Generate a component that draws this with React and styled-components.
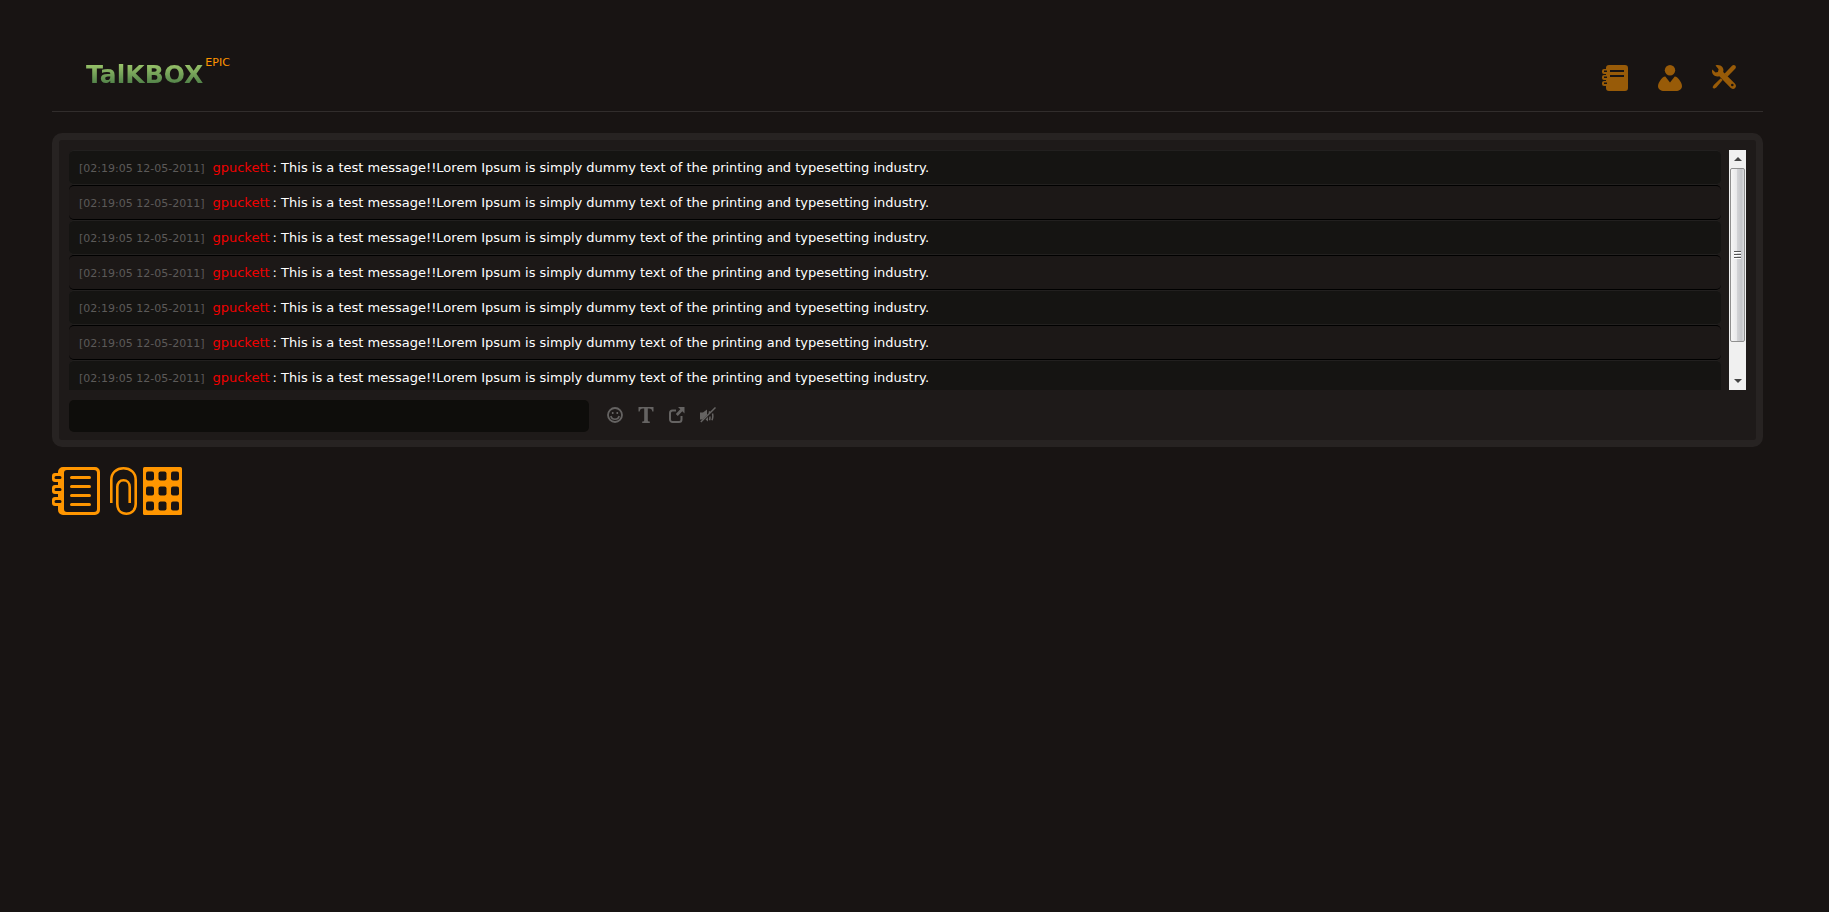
import React, { useRef, useState } from "react";
import styled, { createGlobalStyle } from "styled-components";

const GlobalStyle = createGlobalStyle`
  * {
    box-sizing: border-box;
  }
  body {
    margin: 0;
    background: #181413;
    color: #fff;
    font-family: Verdana, "DejaVu Sans", sans-serif;
    font-size: 13px;
  }
`;

const messages = Array.from({ length: 7 }, (_, id) => ({
  id,
  time: "02:19:05 12-05-2011",
  user: "gpuckett",
  text: "This is a test message!!Lorem Ipsum is simply dummy text of the printing and typesetting industry.",
}));

const NotebookIcon = () => (
  <svg width="26" height="26" viewBox="0 0 26 26" fill="currentColor" fillRule="evenodd">
    <path d="M7 0h16a3 3 0 0 1 3 3v20a3 3 0 0 1-3 3H7a3 3 0 0 1-3-3v-2H2a2 2 0 0 1-2-2v-1a2 2 0 0 1 2-2h2v-1H2a2 2 0 0 1-2-2v-1a2 2 0 0 1 2-2h2V9H2a2 2 0 0 1-2-2V6a2 2 0 0 1 2-2h2V3a3 3 0 0 1 3-3zM8 5v2h14V5zM8 10v2h14v-2zM2 5.500v1.500h3V5.500zM2 11.500v1.500h3v-1.500zM2 17.500V19h3v-1.500z" />
  </svg>
);

const UserIcon = () => (
  <svg width="24" height="26" viewBox="0 0 24 26" fill="currentColor">
    <circle cx="12" cy="5.200" r="5.200" />
    <path d="M7.300 11.500 12 17.500l4.700-6c2 .3 3.300 1.400 4.400 3 1.600 2.300 2.900 4.500 2.900 6.500 0 3.500-3 5-6 5H6c-3 0-6-1.500-6-5 0-2 1.300-4.200 2.900-6.500 1.100-1.600 2.400-2.700 4.400-3z" />
  </svg>
);

const ToolsIcon = () => (
  <svg width="24" height="24" viewBox="0 0 24 24" fill="currentColor" fillRule="evenodd">
    <path d="M3.500.4C6 -.3 9 .2 10.500 2.200c1.200 1.600 1 3.300.7 4.900l11.600 11.300c1.500 1.500 1.500 3.300.3 4.600-1.300 1.300-3.200 1.300-4.600-.2L7.300 11.200C5 11.800 2.800 11.400 1.400 9.800 0 8.300-.3 6.100.3 4.600l3.200 2.800 2.400-.5.7-2.600zM20.300 18.700a1.300 1.300 0 1 0 0 2.600 1.300 1.300 0 0 0 0-2.600z" />
    <path d="M20 .8c1-1 2.300-1 3.200-.2.900.9.900 2.300 0 3.200l-7.800 8-3-3zM8.800 13.200l1.900 1.900-6.400 7.300-2.300 1.300-1.500-1.400 1.300-2.300z" />
  </svg>
);

const SmileIcon = () => (
  <svg width="16" height="16" viewBox="0 0 16 16" fill="none" stroke="currentColor">
    <circle cx="8" cy="8" r="7" strokeWidth="1.800" />
    <path d="M3.800 9c.6 2.200 2.200 3.300 4.200 3.300s3.600-1.100 4.200-3.300" strokeWidth="1.500" />
    <path d="M5.700 5v2M10.300 5v2" strokeWidth="1.600" />
  </svg>
);

const TypeIcon = () => (
  <svg width="16" height="16" viewBox="0 0 16 16" fill="currentColor">
    <path d="M.5 0h15v4.500h-1.200C14 2.500 13.200 1.600 11 1.600H9.800v11.600c0 .9.600 1.300 2 1.400V16H4.200v-1.400c1.400-.1 2-.5 2-1.400V1.600H5C2.800 1.600 2 2.500 1.700 4.500H.5z" />
  </svg>
);

const ShareIcon = () => (
  <svg width="16" height="16" viewBox="0 0 16 16">
    <path d="M7 3.500H3.500A2.500 2.500 0 0 0 1 6v6.500A2.500 2.500 0 0 0 3.500 15H10a2.500 2.500 0 0 0 2.500-2.500V9" fill="none" stroke="currentColor" strokeWidth="2" />
    <path d="M9 0h6.500v6.500l-2.200-2.200-4.500 4.600-2-2 4.500-4.600z" fill="currentColor" />
  </svg>
);

const MuteIcon = () => (
  <svg width="16" height="16" viewBox="0 0 16 16">
    <path d="M0 5.500h3L7 2.500v5.500L2.500 12.500H0zM5.500 12.500 8 10v4.500z" fill="currentColor" />
    <path d="M15.500.5.8 15M9.800 9.500c.3 1.500.1 2.700-.3 3.800M12.500 6.500c.6 2.300.3 4.800-.5 6.800M9 4.500l1 1.500" fill="none" stroke="currentColor" strokeWidth="1.500" />
  </svg>
);

const NotesIcon = () => (
  <svg width="48" height="48" viewBox="0 0 48 48" fill="currentColor" fillRule="evenodd">
    <path d="M11 0h32a5 5 0 0 1 5 5v38a5 5 0 0 1-5 5H11a5 5 0 0 1-5-5v-4H3a3 3 0 0 1-3-3v-3a3 3 0 0 1 3-3h3v-3H3a3 3 0 0 1-3-3v-3a3 3 0 0 1 3-3h3v-3H3a3 3 0 0 1-3-3V9a3 3 0 0 1 3-3h3V5a5 5 0 0 1 5-5zM15 3a3 3 0 0 0-3 3v36a3 3 0 0 0 3 3h27a3 3 0 0 0 3-3V6a3 3 0 0 0-3-3zM4 9a1 1 0 0 0 0 3h4a1 1 0 0 0 0-3zM4 21a1 1 0 0 0 0 3h4a1 1 0 0 0 0-3zM4 33a1 1 0 0 0 0 3h4a1 1 0 0 0 0-3z" />
    <path d="M19.500 10.500h18M19.500 19.500h18M19.500 28.500h18M19.500 37.500h18" stroke="currentColor" strokeWidth="3" strokeLinecap="round" />
  </svg>
);

const ClipIcon = () => (
  <svg width="31" height="48" viewBox="-4 0 31 48" fill="none" stroke="currentColor" strokeWidth="2.600">
    <path d="M1.300 36V13C1.300 5.500 6.500 1.300 13.500 1.300S25.700 5.500 25.700 13v24c0 6-4 9.700-9.400 9.700S7.300 43 7.300 37V20c0-4.300 2.600-6.700 6.200-6.700s6.200 2.400 6.200 6.700v16" />
  </svg>
);

const GridIcon = () => (
  <svg width="39" height="48" viewBox="0 0 39 48" fill="currentColor">
    <rect width="39" height="48" rx="1.500" />
    {[4.500, 19.500, 34.500].map((y) =>
      [3, 15.500, 28].map((x) => (
        <rect key={`${x}-${y}`} x={x} y={y} width="8" height="9" rx="2" fill="#181413" />
      ))
    )}
  </svg>
);

const App = () => {
  const listRef = useRef(null);
  const [thumbTop, setThumbTop] = useState(0);

  const handleScroll = (e) => {
    const { scrollTop, scrollHeight } = e.currentTarget;
    setThumbTop((scrollTop / scrollHeight) * 204);
  };

  const scroll = (amount) => listRef.current.scrollBy({ top: amount });

  return (
    <>
      <GlobalStyle />
      <Page>
        <Header>
          <Logo href="#">
            <LogoName>TalKBOX</LogoName>
            <LogoTag>EPIC</LogoTag>
          </Logo>
          <Nav>
            <NavLink href="#" aria-label="Notebook">
              <NotebookIcon />
            </NavLink>
            <NavLink href="#" aria-label="Profile">
              <UserIcon />
            </NavLink>
            <NavLink href="#" aria-label="Settings">
              <ToolsIcon />
            </NavLink>
          </Nav>
        </Header>

        <ChatBox>
          <Viewport>
            <MessageList ref={listRef} onScroll={handleScroll}>
              {messages.map((message) => (
                <Message key={message.id}>
                  <Time>[{message.time}]</Time>
                  <User>{message.user}</User>
                  <span>: {message.text}</span>
                </Message>
              ))}
            </MessageList>
            <ScrollBar>
              <ScrollButton aria-label="Scroll up" onClick={() => scroll(-35)}>
                <svg width="8" height="4" viewBox="0 0 8 4" fill="#444">
                  <path d="M4 0l4 4H0z" />
                </svg>
              </ScrollButton>
              <Track>
                <Thumb style={{ marginTop: `${thumbTop}px` }}>
                  <Grip />
                  <Grip />
                  <Grip />
                </Thumb>
              </Track>
              <ScrollButton aria-label="Scroll down" onClick={() => scroll(35)}>
                <svg width="8" height="4" viewBox="0 0 8 4" fill="#444">
                  <path d="M0 0h8L4 4z" />
                </svg>
              </ScrollButton>
            </ScrollBar>
          </Viewport>
          <Composer onSubmit={(e) => e.preventDefault()}>
            <MessageInput type="text" aria-label="Message" />
            <Tools>
              <ToolButton type="button" aria-label="Smileys">
                <SmileIcon />
              </ToolButton>
              <ToolButton type="button" aria-label="Text style">
                <TypeIcon />
              </ToolButton>
              <ToolButton type="button" aria-label="Pop out">
                <ShareIcon />
              </ToolButton>
              <ToolButton type="button" aria-label="Mute">
                <MuteIcon />
              </ToolButton>
            </Tools>
          </Composer>
        </ChatBox>

        <Shortcuts>
          <NotesIcon />
          <ClipIcon />
          <GridIcon />
        </Shortcuts>
      </Page>
    </>
  );
};

const Page = styled.div`
  padding: 0 66px 0 52px;
`;

const Header = styled.header`
  display: flex;
  justify-content: space-between;
  align-items: center;
  padding: 57px 27px 12px 34px;
  border-bottom: 1px solid #312d2c;
`;

const Logo = styled.a`
  display: flex;
  align-items: flex-start;
  gap: 2px;
  padding-bottom: 10px;
  text-decoration: none;
`;

const LogoName = styled.span`
  padding-top: 4px;
  font-size: 25px;
  font-weight: bold;
  line-height: 28px;
  color: transparent;
  background: linear-gradient(#9cc66b 20%, #4f8048 85%);
  background-clip: text;
`;

const LogoTag = styled.span`
  font-size: 11px;
  line-height: 12px;
  color: #ff9600;
`;

const Nav = styled.nav`
  display: flex;
  gap: 30px;
`;

const NavLink = styled.a`
  display: flex;
  color: #985b08;
  &:hover {
    color: #ff9600;
  }
`;

const ChatBox = styled.main`
  margin-top: 21px;
  padding: 10px 10px 8px;
  border: 7px solid #272322;
  border-radius: 10px;
  background: #1e1a19;
`;

const Viewport = styled.div`
  display: flex;
  gap: 8px;
  height: 240px;
`;

const MessageList = styled.ul`
  flex: 1;
  margin: 0;
  padding: 0 0 35px;
  list-style: none;
  overflow-y: auto;
  scrollbar-width: none;
`;

const Message = styled.li`
  display: flex;
  align-items: baseline;
  height: 35px;
  padding: 0 10px;
  border: 1px solid #000;
  border-width: 1px 0;
  border-radius: 5px;
  background: #1c1817;
  line-height: 33px;
  &:nth-child(odd) {
    border-color: #22201f;
    background: #151412;
  }
`;

const Time = styled.span`
  margin-right: 8px;
  font-size: 11px;
  color: #5c5a59;
`;

const User = styled.span`
  margin-right: 3px;
  color: #f00000;
`;

const ScrollBar = styled.div`
  display: flex;
  flex-direction: column;
  width: 17px;
  background: #f0f0f0;
`;

const ScrollButton = styled.button`
  display: flex;
  align-items: center;
  justify-content: center;
  height: 18px;
  padding: 0;
  border: 0;
  background: none;
`;

const Track = styled.div`
  flex: 1;
  padding: 0 1px;
`;

const Thumb = styled.div`
  display: flex;
  flex-direction: column;
  align-items: center;
  justify-content: center;
  gap: 1px;
  height: 174px;
  border: 1px solid #8f8f8f;
  border-radius: 2px;
  background: linear-gradient(to right, #f6f6f6, #e8e8ea 45%, #d2d3d6 50%, #c4c5c9 80%, #dcdcde);
`;

const Grip = styled.span`
  width: 7px;
  height: 2px;
  border-bottom: 1px solid #fff;
  background: #555;
`;

const Composer = styled.form`
  display: flex;
  align-items: center;
  gap: 18px;
  margin-top: 10px;
`;

const MessageInput = styled.input`
  width: 520px;
  height: 32px;
  padding: 0 10px;
  border: 0;
  border-radius: 5px;
  outline: none;
  background: #0e0d0b;
  color: #fff;
  font: inherit;
`;

const Tools = styled.div`
  display: flex;
  gap: 15px;
  padding-bottom: 2px;
`;

const ToolButton = styled.button`
  display: flex;
  padding: 0;
  border: 0;
  background: none;
  color: #656362;
  cursor: pointer;
`;

const Shortcuts = styled.div`
  display: flex;
  gap: 6px;
  margin-top: 20px;
  color: #ff9600;
`;

export default App;
